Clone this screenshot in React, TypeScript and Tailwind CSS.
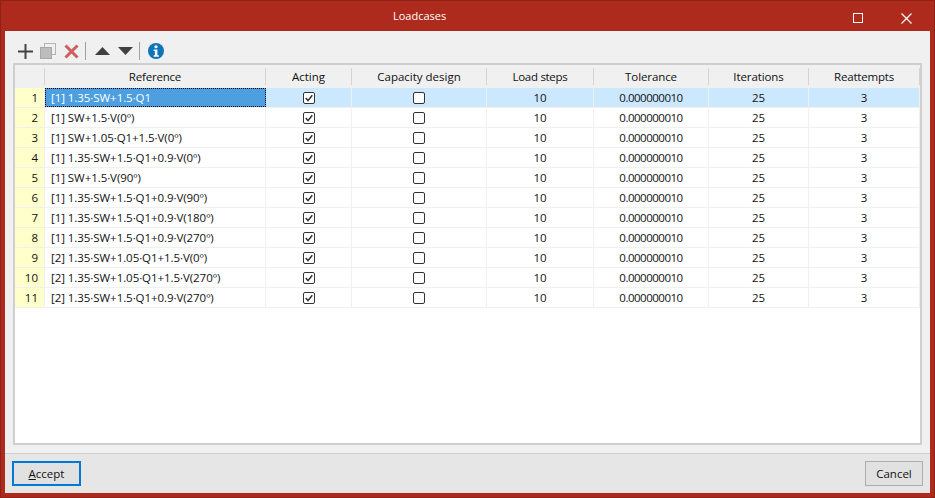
import React from "react";

const rows = [
  "[1] 1.35·SW+1.5·Q1",
  "[1] SW+1.5·V(0º)",
  "[1] SW+1.05·Q1+1.5·V(0º)",
  "[1] 1.35·SW+1.5·Q1+0.9·V(0º)",
  "[1] SW+1.5·V(90º)",
  "[1] 1.35·SW+1.5·Q1+0.9·V(90º)",
  "[1] 1.35·SW+1.5·Q1+0.9·V(180º)",
  "[1] 1.35·SW+1.5·Q1+0.9·V(270º)",
  "[2] 1.35·SW+1.05·Q1+1.5·V(0º)",
  "[2] 1.35·SW+1.05·Q1+1.5·V(270º)",
  "[2] 1.35·SW+1.5·Q1+0.9·V(270º)",
];

const headers = [
  { label: "Reference", cls: "w-[221px] tracking-[-0.2px]" },
  { label: "Acting", cls: "w-[86px]" },
  { label: "Capacity design", cls: "w-[135px]" },
  { label: "Load steps", cls: "w-[107px] tracking-[-0.3px]" },
  { label: "Tolerance", cls: "w-[115px] tracking-[-0.1px]" },
  { label: "Iterations", cls: "w-[100px] tracking-[-0.1px]" },
  { label: "Reattempts", cls: "w-[111px] tracking-[-0.2px]" },
];

const Check = ({ checked }: { checked: boolean }) => (
  <svg width="12" height="12" viewBox="0 0 12 12" fill="none">
    <rect x="0.5" y="0.5" width="11" height="11" rx="1.5" fill="#fff" stroke="#333" />
    {checked && <path d="M2.700 6L5 8.600L9.300 3.200" stroke="#333" strokeWidth="1.500" />}
  </svg>
);

const Sep = () => <div className="w-px h-[18px] bg-[#a0a0a0] mx-[5px]" />;

const Toolbar = () => (
  <div className="h-[32px] pt-[8px] pl-[13px] flex items-center">
    <svg width="15" height="15" viewBox="0 0 15 15" className="mr-[7px]">
      <path d="M6.500 0h2v6.500H15v2H8.500v6.500h-2V8.500H0v-2h6.500z" fill="#444" />
    </svg>
    <svg width="16" height="16" viewBox="0 0 16 16" className="mr-[8px]">
      <rect x="4.500" y="0.500" width="11" height="11" fill="#f0f0f0" stroke="#b4b4b4" />
      <rect x="0.500" y="4.500" width="11" height="11" fill="#bdbdbd" stroke="#a8a8a8" />
    </svg>
    <svg width="15" height="15" viewBox="0 0 15 15" className="mr-[1px]">
      <path d="M1.500 1.500L13.500 13.500M13.500 1.500L1.500 13.500" stroke="#cf5f5f" strokeWidth="3" />
    </svg>
    <Sep />
    <svg width="15" height="8" viewBox="0 0 15 8" className="ml-[4px]">
      <path d="M7.500 0L15 8H0z" fill="#404040" />
    </svg>
    <svg width="15" height="8" viewBox="0 0 15 8" className="ml-[8px] mr-[1px]">
      <path d="M0 0H15L7.500 8z" fill="#404040" />
    </svg>
    <Sep />
    <svg width="16" height="16" viewBox="0 0 17 17" className="ml-[3px]">
      <circle cx="8.500" cy="8.500" r="8.500" fill="#0f74b8" />
      <circle cx="8.500" cy="4" r="1.700" fill="#fff" />
      <path d="M6 7h4v6h1.500v1.500h-5.500V13h1.300V8.500H6z" fill="#fff" />
    </svg>
  </div>
);

const Row = ({ index, text }: { index: number; text: string }) => {
  const selected = index === 0;
  return (
    <div className="flex h-[20px] border-b border-[#f0f0f0] leading-[19px]">
      <div className="w-[30px] bg-[#ffffcc] text-right pr-[6px] border-r border-[#f0f0f0]">{index + 1}</div>
      <div className={`flex ${selected ? "bg-[#cce8ff]" : ""}`}>
        <div
          className={`w-[221px] tracking-[-0.06px] border-r ${
            selected
              ? "bg-[#4d9fe0] text-white border border-dotted border-black leading-[17px] pl-[5px]"
              : "pl-[6px] border-[#f0f0f0]"
          }`}
        >
          {text}
        </div>
        <div className="w-[86px] flex items-center justify-center border-r border-[#f0f0f0]">
          <Check checked />
        </div>
        <div className="w-[135px] flex items-center justify-center border-r border-[#f0f0f0]">
          <Check checked={false} />
        </div>
        <div className="w-[107px] text-center border-r border-[#f0f0f0]">10</div>
        <div className="w-[115px] text-center tracking-[-0.5px] border-r border-[#f0f0f0]">0.000000010</div>
        <div className="w-[100px] text-center border-r border-[#f0f0f0]">25</div>
        <div className="w-[111px] text-center border-r border-[#f0f0f0]">3</div>
      </div>
    </div>
  );
};

export default function App() {
  return (
    <div className="w-[935px] h-[498px] flex flex-col bg-[#ae2a1c] border border-[#8f2217] px-[4px] pb-[4px] font-['Open_Sans',sans-serif] text-[11.500px] text-[#111] overflow-hidden">
      <div className="h-[30px] relative flex items-center pl-[388px] text-white text-[11px] shrink-0">
        Loadcases
        <div className="absolute left-[848px] top-[12px] w-[10px] h-[10px] border border-white" />
        <svg width="11" height="11" viewBox="0 0 11 11" className="absolute left-[896px] top-[12px]">
          <path d="M0.500 0.500L10.500 10.500M10.500 0.500L0.500 10.500" stroke="#fff" strokeWidth="1.200" />
        </svg>
      </div>
      <div className="flex-1 flex flex-col bg-[#f0f0f0] min-h-0">
        <Toolbar />
        <div className="mx-[8px] h-[382px] border-2 border-[#cfcfcf] bg-white shrink-0">
          <div className="flex h-[23px] bg-[#f0f0f0] pt-[2px]">
            <div className="w-[30px] h-[17px] mt-[1px] border-r border-[#d4d4d4]" />
            {headers.map((h) => (
              <div key={h.label} className={`${h.cls} h-[17px] mt-[1px] text-center leading-[17px] border-r border-[#d4d4d4]`}>
                {h.label}
              </div>
            ))}
          </div>
          {rows.map((text, i) => (
            <Row key={text + i} index={i} text={text} />
          ))}
        </div>
        <div className="mt-[8px] flex-1 bg-[#e6e6e6] border-t border-[#d0d0d0] pl-[7px] pr-[7px] flex items-center justify-between">
          <button className="w-[69px] h-[25px] border-2 border-[#0078d7] bg-[#e1e1e1] text-center">
            <span className="underline">A</span>ccept
          </button>
          <button className="w-[58px] h-[25px] border border-[#adadad] bg-[#e1e1e1] text-center">Cancel</button>
        </div>
      </div>
    </div>
  );
}
